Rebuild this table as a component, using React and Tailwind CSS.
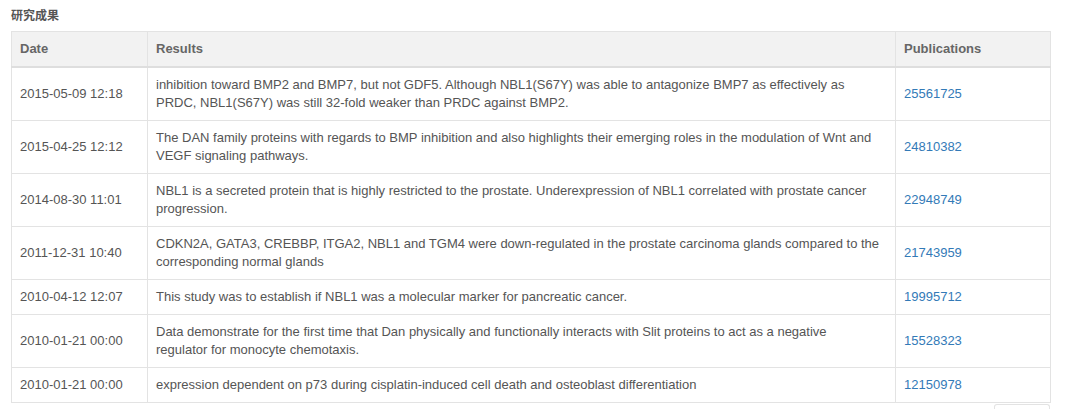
import React from 'react';

const rows = [
  {
    date: '2015-05-09 12:18',
    text: 'inhibition toward BMP2 and BMP7, but not GDF5. Although NBL1(S67Y) was able to antagonize BMP7 as effectively as PRDC, NBL1(S67Y) was still 32-fold weaker than PRDC against BMP2.',
    pmid: '25561725',
  },
  {
    date: '2015-04-25 12:12',
    text: 'The DAN family proteins with regards to BMP inhibition and also highlights their emerging roles in the modulation of Wnt and VEGF signaling pathways.',
    pmid: '24810382',
  },
  {
    date: '2014-08-30 11:01',
    text: 'NBL1 is a secreted protein that is highly restricted to the prostate. Underexpression of NBL1 correlated with prostate cancer progression.',
    pmid: '22948749',
  },
  {
    date: '2011-12-31 10:40',
    text: 'CDKN2A, GATA3, CREBBP, ITGA2, NBL1 and TGM4 were down-regulated in the prostate carcinoma glands compared to the corresponding normal glands',
    pmid: '21743959',
  },
  {
    date: '2010-04-12 12:07',
    text: 'This study was to establish if NBL1 was a molecular marker for pancreatic cancer.',
    pmid: '19995712',
  },
  {
    date: '2010-01-21 00:00',
    text: 'Data demonstrate for the first time that Dan physically and functionally interacts with Slit proteins to act as a negative',
    text2: 'regulator for monocyte chemotaxis.',
    pmid: '15528323',
  },
  {
    date: '2010-01-21 00:00',
    text: 'expression dependent on p73 during cisplatin-induced cell death and osteoblast differentiation',
    pmid: '12150978',
  },
];

function App() {
  return (
    <div className="bg-white min-h-[409px] pl-[11px] pt-[6px] text-[#555] font-['Liberation_Sans','Noto_Sans_CJK_SC',sans-serif]">
      {/* 标题 */}
      <h3 className="text-[12px] font-bold leading-[18px] text-[#555] mb-[7px] font-['Noto_Sans_CJK_SC',sans-serif]">研究成果</h3>

      <table className="w-[1040px] border-collapse table-fixed text-[13px] leading-[18px] border border-[#e3e3e3]">
        <thead>
          <tr className="bg-[#f2f2f2]">
            <th className="w-[136px] text-left font-bold text-[#666] px-[8px] py-[8px] border border-[#e3e3e3] border-b-2 border-b-[#dedede]">Date</th>
            <th className="w-[748px] text-left font-bold text-[#666] px-[8px] py-[8px] border border-[#e3e3e3] border-b-2 border-b-[#dedede]">Results</th>
            <th className="text-left font-bold text-[#666] px-[8px] py-[8px] border border-[#e3e3e3] border-b-2 border-b-[#dedede]">Publications</th>
          </tr>
        </thead>
        <tbody>
          {rows.map((row, i) => (
            <tr key={i}>
              <td className="px-[8px] py-[8px] border border-[#e3e3e3] align-middle">{row.date}</td>
              <td className="px-[8px] py-[8px] border border-[#e3e3e3] align-middle">
                {row.text}
                {row.text2 && (
                  <>
                    <br />
                    {row.text2}
                  </>
                )}
              </td>
              <td className="px-[8px] py-[8px] border border-[#e3e3e3] align-middle">
                <a href="#" className="text-[#337ab7]">{row.pmid}</a>
              </td>
            </tr>
          ))}
        </tbody>
      </table>

      <div className="flex justify-end w-[1040px]">
        <div className="w-[56px] h-[10px] mt-[1px] mr-[1px] border border-b-0 border-[#e3e3e3] rounded-t-[3px]"></div>
      </div>
    </div>
  );
}

export default App;
